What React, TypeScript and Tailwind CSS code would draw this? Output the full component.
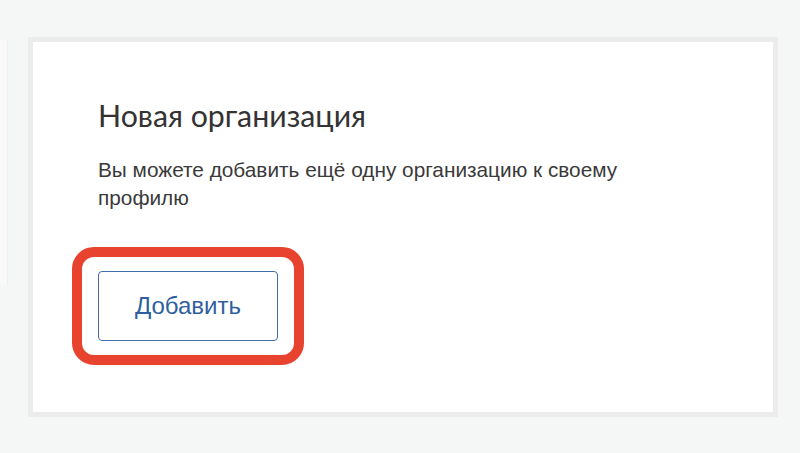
export default function App() {
  return (
    <div className="relative h-[453px] w-[800px] overflow-hidden bg-[#f5f6f6] font-['Liberation_Sans',Arial,sans-serif]">
      {/* left neighbour panel edge */}
      <div className="absolute left-0 top-[40px] h-[245px] w-[8px] border-r border-[#efefef] bg-[#f9f9f9]" />

      <div className="pl-[28px] pt-[37px]">
        <div className="h-[380px] w-[750px] border-[5px] border-[#ececec] bg-white pl-[65px] pt-[55px]">
          <h2 className="font-['Lato',sans-serif] text-[30.3px] leading-[36px] text-[#333333]">
            Новая организация
          </h2>
          <p className="mt-[23px] w-[570px] text-[20.8px] leading-[28px] text-[#3a3a3a]">
            Вы можете добавить ещё одну организацию к своему профилю
          </p>
          <div className="-ml-[26px] mt-[35px] inline-block rounded-[22px] border-[10px] border-[#e8432e] px-[16px] py-[14px]">
            <button className="flex h-[70px] w-[180px] items-center justify-center rounded-[4px] border border-[#3d6ea8] text-[24px] text-[#2f5f9e]">
              Добавить
            </button>
          </div>
        </div>
      </div>
    </div>
  );
}
